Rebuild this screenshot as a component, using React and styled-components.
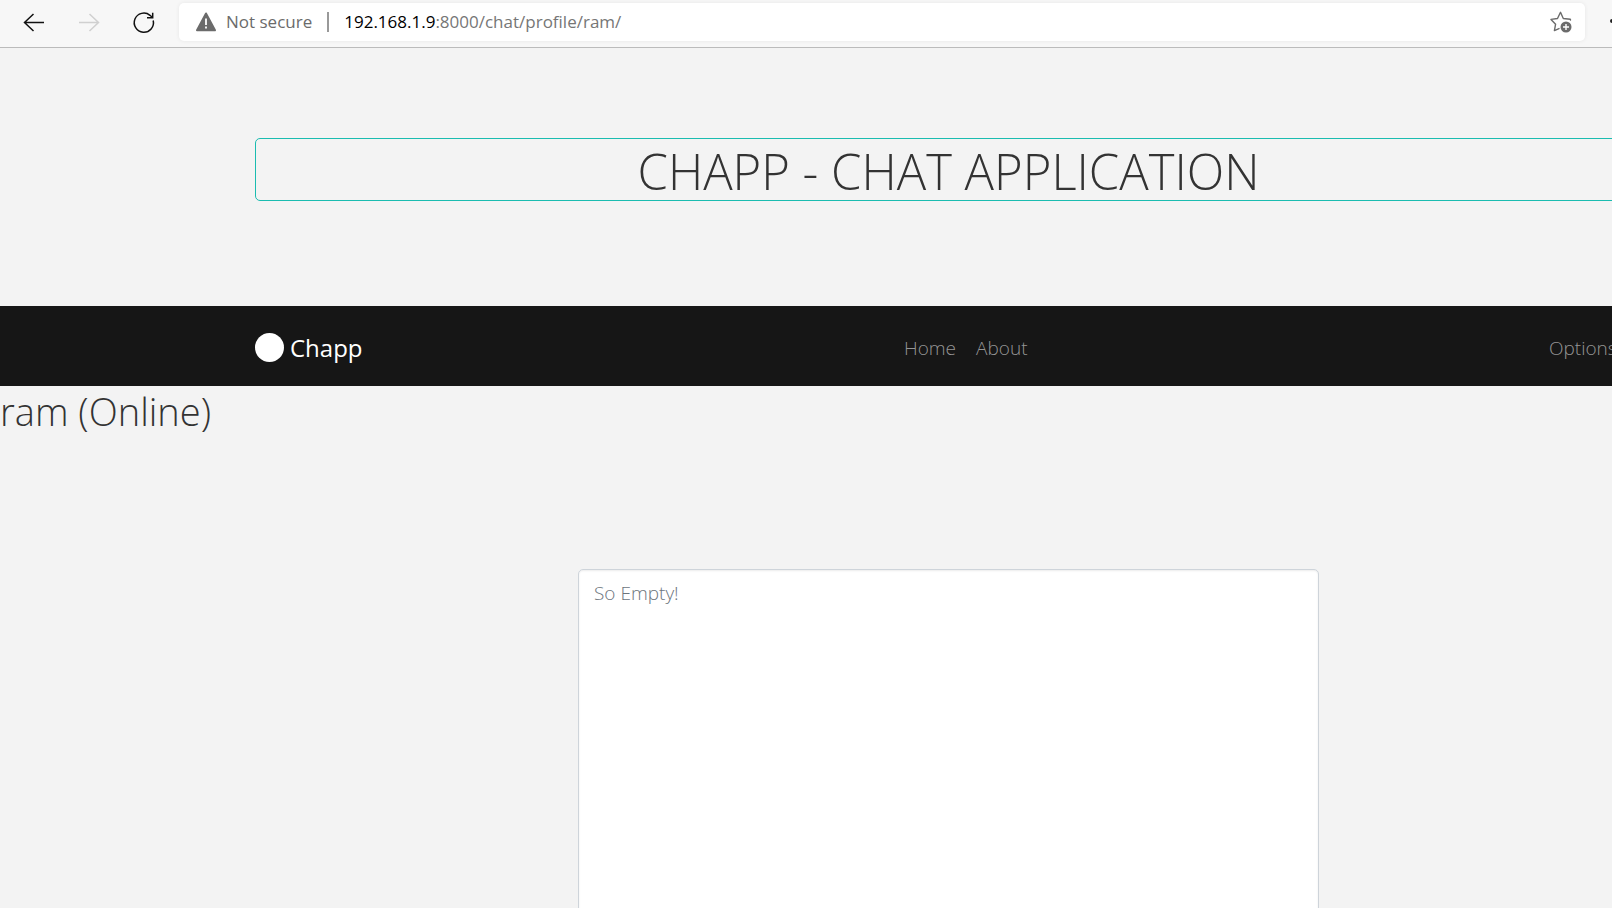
import React from 'react';
import styled, { createGlobalStyle, css } from 'styled-components';

const GlobalStyle = createGlobalStyle`
  *, *::before, *::after { box-sizing: border-box; }
  body {
    margin: 0;
    background: #f3f3f3;
    color: #333;
    font-family: "Open Sans", "Noto Sans", sans-serif;
    font-weight: 300;
  }
`;

const Screen = styled.div`
  display: flex;
  flex-direction: column;
  height: 100vh;
  overflow: hidden;
`;

const BrowserBar = styled.header`
  display: flex;
  flex: none;
  align-items: center;
  height: 48px;
  padding: 0 27px 3px 20px;
  background: #f7f7f7;
  border-bottom: 1px solid #bbb;
`;

const ToolButtons = styled.div`
  display: flex;
  gap: 27px;
  margin-right: 21px;
`;

const ToolButton = styled.button`
  display: flex;
  padding: 0;
  border: 0;
  background: none;
  color: ${({ $color }) => $color || '#111'};
`;

const AddressBar = styled.div`
  display: flex;
  flex: 1;
  align-items: center;
  height: 38px;
  padding: 0 12px 0 16px;
  border-radius: 5px;
  background: #fff;
  box-shadow: 0 0 4px rgba(0, 0, 0, 0.07);
  color: #767676;
  font-size: 17px;
  font-weight: 400;
  line-height: 24px;
  white-space: nowrap;
`;

const Security = styled.span`
  display: flex;
  align-items: center;
  gap: 9px;
  padding-right: 15px;
  border-right: 2px solid #999;
  margin-right: 15px;
  color: #6b6b6b;
  line-height: 20px;
`;

const Url = styled.span`
  flex: 1;
`;

const Host = styled.span`
  color: #000;
`;

const Edge = styled.div`
  position: absolute;
  top: 19px;
  right: 0;
  width: 2px;
  height: 4px;
  border-radius: 2px 0 0 2px;
  background: #222;
`;

const Viewport = styled.main`
  flex: 1;
  min-height: 0;
  overflow: hidden;
`;

const Page = styled.div`
  width: calc(100% + 285px);
`;

const container = css`
  width: calc(100% - 510px);
  margin: 0 auto;
`;

const Hero = styled.div`
  ${container}
  padding: 90px 0 105px;
`;

const Title = styled.h1`
  margin: 0;
  padding-top: 3px;
  border: 1px solid #1abcb0;
  border-radius: 5px;
  font-size: 49px;
  font-weight: 300;
  line-height: 58px;
  text-align: center;
  white-space: nowrap;
`;

const Navbar = styled.nav`
  height: 80px;
  background: #161616;
`;

const NavInner = styled.div`
  ${container}
  display: flex;
  align-items: center;
  justify-content: space-between;
  height: 80px;
  padding-top: 3px;
`;

const Brand = styled.a`
  display: flex;
  align-items: center;
  gap: 6px;
  margin-right: 20px;
  color: #fff;
  font-size: 24px;
  font-weight: 400;
  line-height: 32px;
  text-decoration: none;
`;

const Dot = styled.span`
  width: 29px;
  height: 29px;
  border-radius: 50%;
  background: #fff;
`;

const NavLinks = styled.div`
  display: flex;
  gap: 20px;
`;

const NavLink = styled.a`
  color: #959595;
  font-size: 19px;
  line-height: 30px;
  text-decoration: none;
`;

const OptionsLink = styled(NavLink)`
  display: flex;
  align-items: center;
  width: 93px;
`;

const UserHeading = styled.h2`
  margin: 0;
  font-size: 38px;
  font-weight: 300;
  line-height: 50px;
`;

const ChatArea = styled.div`
  ${container}
  display: flex;
  justify-content: center;
  padding-top: 133px;
`;

const ChatLog = styled.textarea`
  width: 100%;
  max-width: 741px;
  height: 500px;
  padding: 8px 15px;
  border: 1px solid #ced4da;
  border-radius: 5px;
  outline: 0;
  resize: none;
  background: #fff;
  box-shadow: inset 0 1px 2px rgba(0, 0, 0, 0.08);
  font: 300 19px/30px "Open Sans", "Noto Sans", sans-serif;

  &::placeholder {
    color: #6c757d;
    opacity: 1;
  }
`;

function Arrow({ forward }) {
  return (
    <svg width="28" height="24" viewBox="0 0 28 24" fill="none" stroke="currentColor" strokeWidth="1.5" aria-hidden="true">
      <path d={forward ? 'M4 12.500H23.500M14.500 4L23.500 12.500L14.500 21' : 'M24 12.500H4.500M13.500 4L4.500 12.500L13.500 21'} />
    </svg>
  );
}

function Reload() {
  return (
    <svg width="28" height="24" viewBox="0 0 28 24" fill="none" stroke="currentColor" strokeWidth="1.500" aria-hidden="true">
      <path d="M23.200 10.500A9.600 9.600 0 1 1 20 5.300L22.500 7.500M22.700 2.800V7.700H17" />
    </svg>
  );
}

function Warning() {
  return (
    <svg width="22" height="20" viewBox="0 0 22 20" aria-hidden="true">
      <path d="M11 1.500L20 18.300H2Z" fill="#6b6b6b" stroke="#6b6b6b" strokeWidth="2" strokeLinejoin="round" />
      <path d="M11 6.500V13M11 14.500V16.500" stroke="#fff" strokeWidth="1.800" />
    </svg>
  );
}

function FavoriteStar() {
  return (
    <svg width="24" height="24" viewBox="0 0 24 24" fill="none" aria-hidden="true">
      <path d="M21.500 10L21.300 9.200L14.300 8.500L11.500 2.300L8.500 8.500L2 9.400L6.600 14.200L5.400 20.600L10 18.600" stroke="#6b6b6b" strokeWidth="1.400" strokeLinejoin="round" strokeLinecap="round" />
      <circle cx="17" cy="17" r="5.500" fill="#6b6b6b" />
      <path d="M17 14V20M14 17H20" stroke="#fff" strokeWidth="1.400" />
    </svg>
  );
}

export default function App() {
  return (
    <Screen>
      <GlobalStyle />
      <BrowserBar>
        <ToolButtons>
          <ToolButton type="button" aria-label="Back"><Arrow /></ToolButton>
          <ToolButton type="button" aria-label="Forward" $color="#d0d0d0"><Arrow forward /></ToolButton>
          <ToolButton type="button" aria-label="Reload"><Reload /></ToolButton>
        </ToolButtons>
        <AddressBar>
          <Security><Warning />Not secure</Security>
          <Url><Host>192.168.1.9</Host>:8000/chat/profile/ram/</Url>
          <ToolButton type="button" aria-label="Add to favorites"><FavoriteStar /></ToolButton>
        </AddressBar>
        <Edge />
      </BrowserBar>
      <Viewport>
        <Page>
          <Hero><Title>CHAPP - CHAT APPLICATION</Title></Hero>
          <Navbar>
            <NavInner>
              <Brand href="#"><Dot />Chapp</Brand>
              <NavLinks>
                <NavLink href="#">Home</NavLink>
                <NavLink href="#">About</NavLink>
              </NavLinks>
              <OptionsLink href="#">Options</OptionsLink>
            </NavInner>
          </Navbar>
          <UserHeading>ram (Online)</UserHeading>
          <ChatArea>
            <ChatLog readOnly aria-label="Chat messages" placeholder="So Empty!" />
          </ChatArea>
        </Page>
      </Viewport>
    </Screen>
  );
}
